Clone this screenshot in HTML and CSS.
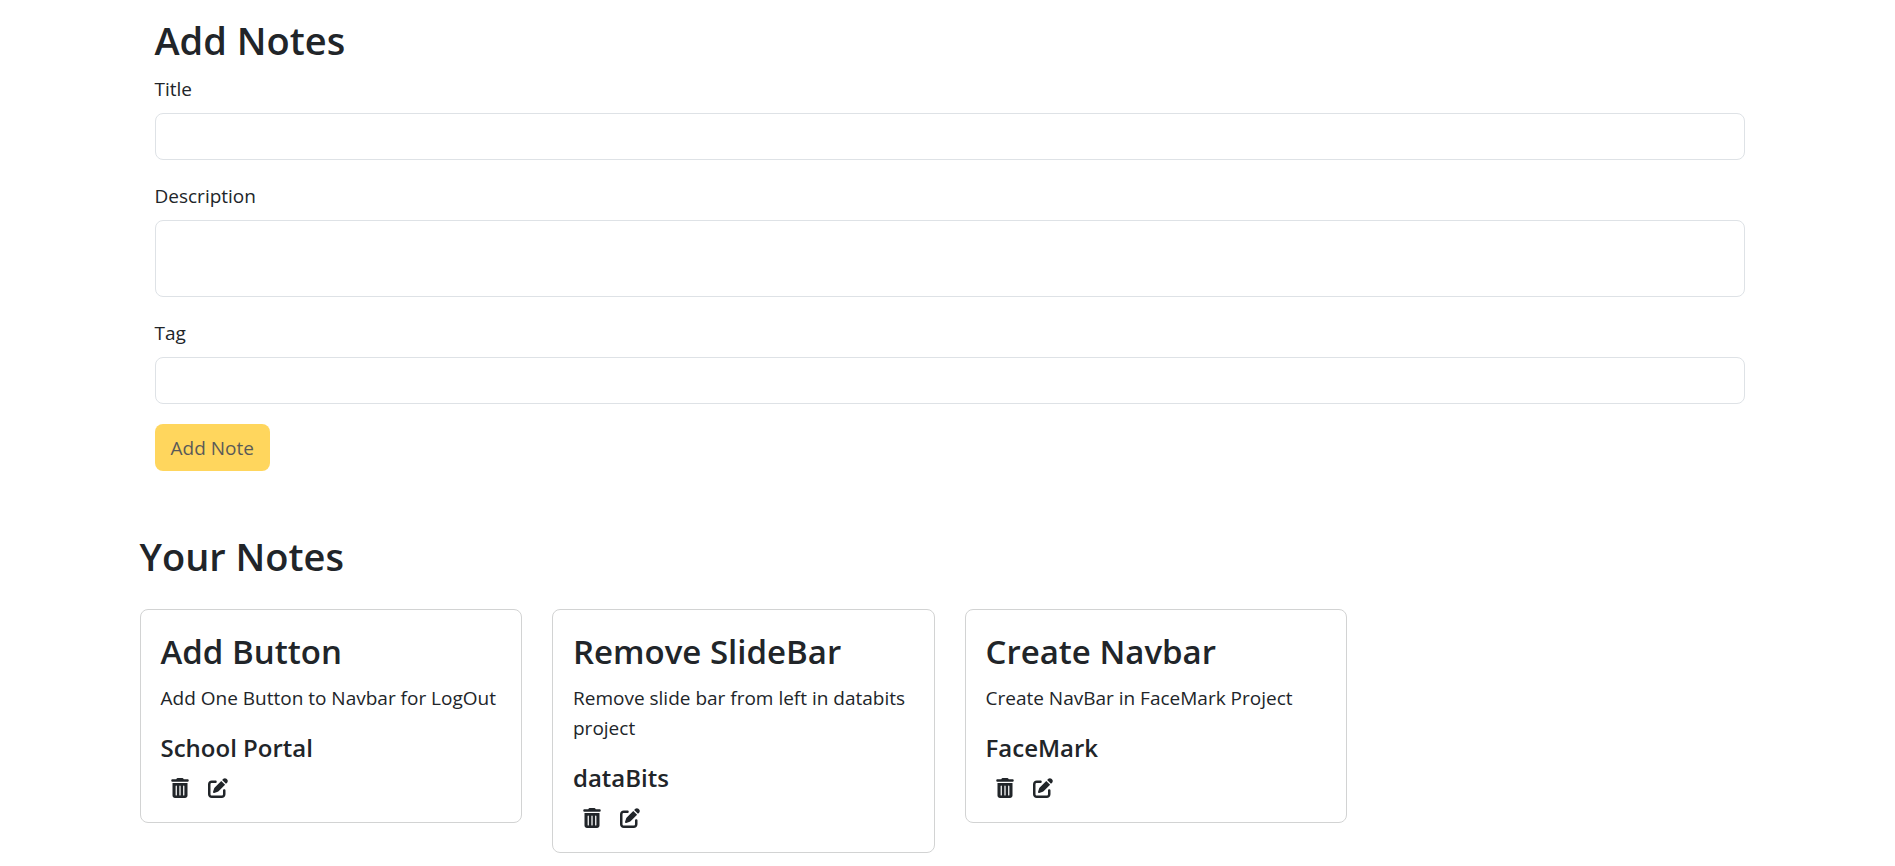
FILE: index.html
```html
<!DOCTYPE html>
<html lang="en">
<head>
  <meta charset="utf-8">
  <meta name="viewport" content="width=device-width, initial-scale=1">
  <title>Notes</title>
  <link rel="stylesheet" href="styles.css">
</head>
<body>
  <svg class="sprite" aria-hidden="true">
    <symbol id="trash" viewBox="0 0 448 512"><path d="M135.2 17.7C140.6 6.8 151.7 0 163.8 0H284.2c12.1 0 23.2 6.8 28.6 17.7L320 32h96c17.7 0 32 14.3 32 32s-14.3 32-32 32H32C14.3 96 0 81.7 0 64S14.3 32 32 32h96l7.2-14.3zM32 128H416V448c0 35.3-28.7 64-64 64H96c-35.3 0-64-28.7-64-64V128zm96 64c-8.8 0-16 7.2-16 16V432c0 8.8 7.2 16 16 16s16-7.2 16-16V208c0-8.8-7.2-16-16-16zm96 0c-8.8 0-16 7.2-16 16V432c0 8.8 7.2 16 16 16s16-7.2 16-16V208c0-8.8-7.2-16-16-16zm96 0c-8.8 0-16 7.2-16 16V432c0 8.8 7.2 16 16 16s16-7.2 16-16V208c0-8.8-7.2-16-16-16z"/></symbol>
    <symbol id="edit" viewBox="0 0 512 512"><path d="M471.6 21.7c-21.9-21.9-57.3-21.9-79.2 0L362.3 51.7l97.9 97.9 30.1-30.1c21.9-21.9 21.9-57.3 0-79.2L471.6 21.7zm-299.2 220c-6.1 6.1-10.8 13.6-13.5 21.9l-29.6 88.8c-2.9 8.6-.6 18.1 5.8 24.6s15.9 8.7 24.6 5.8l88.8-29.6c8.2-2.7 15.7-7.4 21.9-13.5L437.7 172.3 339.7 74.3 172.4 241.7zM96 64C43 64 0 107 0 160V416c0 53 43 96 96 96H352c53 0 96-43 96-96V320c0-17.7-14.3-32-32-32s-32 14.3-32 32v96c0 17.7-14.3 32-32 32H96c-17.7 0-32-14.3-32-32V160c0-17.7 14.3-32 32-32h96c17.7 0 32-14.3 32-32s-14.3-32-32-32H96z"/></symbol>
  </svg>

  <main class="container">
    <section class="add-notes">
      <h2 class="heading">Add Notes</h2>
      <form class="note-form">
        <div class="field">
          <label class="label" for="title">Title</label>
          <input class="control" type="text" id="title" name="title">
        </div>
        <div class="field">
          <label class="label" for="description">Description</label>
          <textarea class="control" id="description" name="description" rows="2"></textarea>
        </div>
        <div class="field">
          <label class="label" for="tag">Tag</label>
          <input class="control" type="text" id="tag" name="tag">
        </div>
        <button class="submit" type="submit" disabled>Add Note</button>
      </form>
    </section>

    <section class="your-notes">
      <h2 class="heading">Your Notes</h2>
      <div class="cards">
        <article class="card">
          <h3 class="card-title">Add Button</h3>
          <p class="card-text">Add One Button to Navbar for LogOut</p>
          <h5 class="card-tag">School Portal</h5>
          <div class="actions">
            <button class="action" type="button" aria-label="Delete note"><svg class="icon icon-trash"><use href="#trash"/></svg></button>
            <button class="action" type="button" aria-label="Edit note"><svg class="icon"><use href="#edit"/></svg></button>
          </div>
        </article>
        <article class="card">
          <h3 class="card-title">Remove SlideBar</h3>
          <p class="card-text">Remove slide bar from left in databits project</p>
          <h5 class="card-tag">dataBits</h5>
          <div class="actions">
            <button class="action" type="button" aria-label="Delete note"><svg class="icon icon-trash"><use href="#trash"/></svg></button>
            <button class="action" type="button" aria-label="Edit note"><svg class="icon"><use href="#edit"/></svg></button>
          </div>
        </article>
        <article class="card">
          <h3 class="card-title">Create Navbar</h3>
          <p class="card-text">Create NavBar in FaceMark Project</p>
          <h5 class="card-tag">FaceMark</h5>
          <div class="actions">
            <button class="action" type="button" aria-label="Delete note"><svg class="icon icon-trash"><use href="#trash"/></svg></button>
            <button class="action" type="button" aria-label="Edit note"><svg class="icon"><use href="#edit"/></svg></button>
          </div>
        </article>
      </div>
    </section>
  </main>
</body>
</html>
```
FILE: styles.css
```css
*,
*::before,
*::after {
  box-sizing: border-box;
}

body {
  margin: 0;
  padding-left: 4px;
  background: #fff;
  color: #212529;
  font-family: "Segoe UI", "Open Sans", "Noto Sans", sans-serif;
  font-size: 19px;
  line-height: 30px;
}

.sprite {
  display: none;
}

.container {
  max-width: 1620px;
  margin: 0 auto;
}

.add-notes {
  padding: 15px 15px 0;
}

.heading {
  margin: 0 0 8px;
  font-size: 38px;
  font-weight: 600;
  line-height: 50px;
}

.field {
  margin-bottom: 20px;
}

.label {
  display: block;
  width: fit-content;
  margin-bottom: 8px;
  line-height: 32px;
}

.control {
  display: block;
  width: 100%;
  padding: 8px 15px 7px;
  border: 1px solid #dee2e6;
  border-radius: 8px;
  background: #fff;
  color: inherit;
  font: inherit;
  height: 47px;
}

textarea.control {
  height: 77px;
  resize: none;
}

.submit {
  display: block;
  height: 47px;
  padding: 1px 16px 0;
  border: 0;
  border-radius: 8px;
  background: #ffc107;
  color: #000;
  font: inherit;
  opacity: 0.65;
}

.your-notes {
  padding-top: 60px;
}

.cards {
  display: grid;
  grid-template-columns: repeat(4, 1fr);
  align-items: start;
  gap: 30px;
  padding-top: 20px;
}

.card {
  padding: 21px 20px 19px;
  border: 1px solid #d2d3d3;
  border-radius: 8px;
}

.card-title {
  margin: 0 0 10px;
  font-size: 33px;
  font-weight: 600;
  line-height: 42px;
}

.card-text {
  margin: 0 0 20px;
}

.card-tag {
  margin: 0 0 10px;
  font-size: 24px;
  font-weight: 600;
  line-height: 30px;
}

.actions {
  display: flex;
  gap: 19px;
  height: 30px;
  padding-left: 10px;
}

.action {
  display: flex;
  align-items: center;
  padding: 0;
  border: 0;
  background: none;
  color: inherit;
}

.icon {
  display: block;
  width: 20px;
  height: 20px;
  fill: currentColor;
}

.icon-trash {
  width: 18px;
}
```
